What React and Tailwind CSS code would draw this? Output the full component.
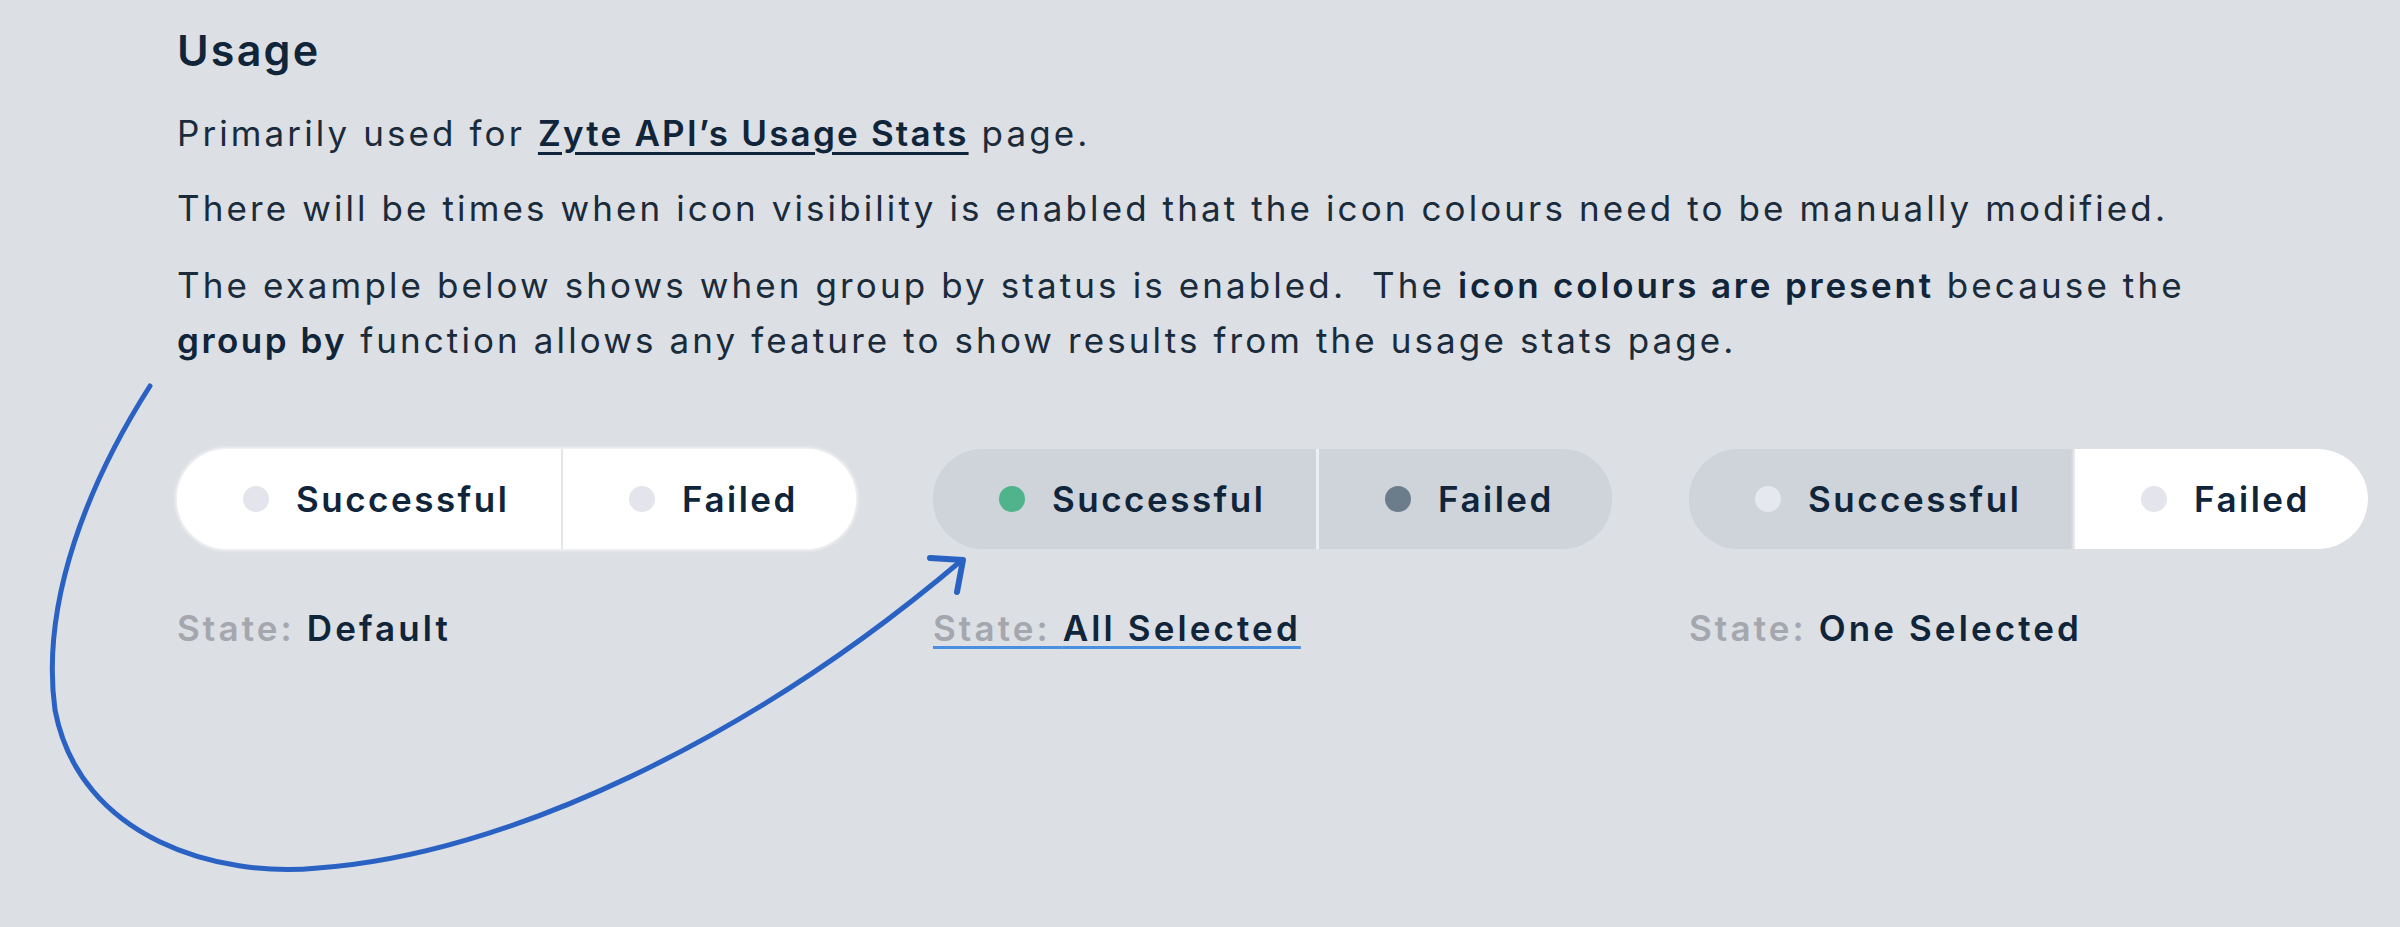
import React from 'react';

const FONT = '"Inter", "Liberation Sans", sans-serif';

const Dot = ({ color }) => (
  <span className={`w-[26px] h-[26px] rounded-full shrink-0 ${color}`} />
);

const Segment = ({ label, dot, bg, className = '' }) => (
  <div className={`flex items-center h-full gap-[27px] pl-[66px] ${bg} ${className}`}>
    <Dot color={dot} />
    <span className="text-[35px] font-semibold tracking-[2.5px] text-[#10253a]">{label}</span>
  </div>
);

const Group = ({ variant }) => {
  if (variant === 'default') {
    return (
      <div className="flex h-[100px] rounded-full overflow-hidden bg-white shadow-[0_0_3px_2px_rgba(255,255,255,0.6)]">
        <Segment label="Successful" dot="bg-[#e4e5ec]" bg="bg-white" className="w-[386px] border-r-2 border-[#e3e5e9]" />
        <Segment label="Failed" dot="bg-[#e4e5ec]" bg="bg-white" className="w-[293px]" />
      </div>
    );
  }
  if (variant === 'all') {
    return (
      <div className="flex h-[100px] rounded-full overflow-hidden bg-[#cfd3da]">
        <Segment label="Successful" dot="bg-[#4fb48b]" bg="bg-[#cfd3da]" className="w-[386px] border-r-[3px] border-[#eceef2]" />
        <Segment label="Failed" dot="bg-[#6b7c8a]" bg="bg-[#cfd3da]" className="w-[293px]" />
      </div>
    );
  }
  return (
    <div className="flex h-[100px] rounded-full overflow-hidden bg-[#cfd3da]">
      <Segment label="Successful" dot="bg-[#e6e8ef]" bg="bg-[#cfd3da]" className="w-[386px]" />
      <Segment label="Failed" dot="bg-[#e4e5ec]" bg="bg-white" className="w-[293px] rounded-r-full shadow-[0_0_3px_2px_rgba(255,255,255,0.6)]" />
    </div>
  );
};

const StateLabel = ({ value, underline }) => (
  <div
    className={`mt-[62px] text-[35px] font-semibold tracking-[3.1px] leading-none ${underline ? 'underline decoration-[#4a8fe0] decoration-[3px] underline-offset-[5px]' : ''}`}
  >
    <span className="text-[#a4a7ad]">State: </span>
    <span className="text-[#10253a]">{value}</span>
  </div>
);

export default function App() {
  return (
    <div className="relative w-full h-[927px] overflow-hidden bg-[#dcdfe4]" style={{ fontFamily: FONT }}>
      <div className="pl-[177px] pt-[22px] text-[#1a2b3b] text-[35px] tracking-[3.1px] leading-[55px]">
        <h2 className="text-[43px] font-semibold tracking-[2.2px] leading-[56px] text-[#10253a]">Usage</h2>
        <p className="mt-[28px]">
          Primarily used for{' '}
          <a className="font-semibold tracking-[2.2px] text-[#10253a] underline decoration-[3px] underline-offset-[6px]">Zyte API’s Usage Stats</a>{' '}
          page.
        </p>
        <p className="mt-[20px]">
          There will be times when icon visibility is enabled that the icon colours need to be manually modified.
        </p>
        <p className="mt-[22px]">
          The example below shows when group by status is enabled.&nbsp; The{' '}
          <b className="font-semibold tracking-[2.8px] text-[#10253a]">icon colours are present</b> because the
          <br />
          <b className="font-semibold tracking-[2.5px] text-[#10253a]">group by</b> function allows any feature to show results from the usage stats page.
        </p>

        <div className="flex gap-[77px] mt-[81px]">
          <div>
            <Group variant="default" />
            <StateLabel value="Default" />
          </div>
          <div>
            <Group variant="all" />
            <StateLabel value="All Selected" underline />
          </div>
          <div>
            <Group variant="one" />
            <StateLabel value="One Selected" />
          </div>
        </div>
      </div>

      <svg className="absolute inset-0 pointer-events-none" width="2400" height="927" viewBox="0 0 2400 927" fill="none">
        <path
          d="M150 386 C 90 480, 40 600, 55 710 C 80 840, 220 878, 318 868 C 505 855, 750 740, 962 560"
          stroke="#2a62c4"
          strokeWidth="5"
          strokeLinecap="round"
        />
        <path d="M930 558 L963 560 L957 592" stroke="#2a62c4" strokeWidth="6" strokeLinecap="round" strokeLinejoin="round" />
      </svg>
    </div>
  );
}
